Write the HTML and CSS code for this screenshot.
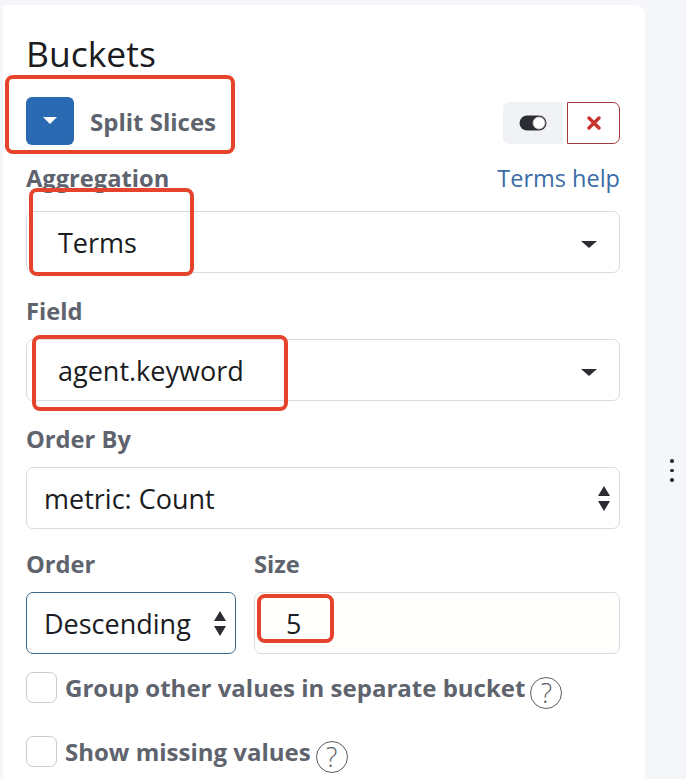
FILE: index.html
```html
<!DOCTYPE html>
<html>
	<head>
		<meta charset="utf-8">
		<title>Buckets</title>
		<link rel="stylesheet" href="styles.css">
	</head>
	<body>
		<div class="page">
			<div class="panel">
				<h2 class="title">Buckets</h2>

				<!-- 分组头部 -->
				<div class="bucketHead">
					<div class="toggleBtn">
						<svg width="14" height="8" viewBox="0 0 14 8"><path d="M0 0 L14 0 L7 7 Z" fill="#fff"/></svg>
					</div>
					<span class="bucketName">Split Slices</span>
					<div class="actions">
						<div class="switchBtn">
							<svg width="28" height="16" viewBox="0 0 28 16">
								<rect x="0.5" y="0.5" width="27" height="15" rx="7.5" fill="#2b2d33"/>
								<circle cx="20" cy="8" r="6" fill="#fff" stroke="#c8c8c8" stroke-width="0.8"/>
							</svg>
						</div>
						<div class="removeBtn">
							<svg width="14" height="14" viewBox="0 0 14 14"><path d="M2 2 L12 12 M12 2 L2 12" stroke="#c7342d" stroke-width="3.4" stroke-linecap="round"/></svg>
						</div>
					</div>
				</div>

				<div class="row aggRow">
					<div class="labelLine">
						<span class="label">Aggregation</span>
						<a class="helpLink">Terms help</a>
					</div>
					<div class="select combo">
						<span>Terms</span>
						<svg class="caret" width="16" height="8" viewBox="0 0 16 8"><path d="M0 0 L16 0 L8 7 Z" fill="#2b2d33"/></svg>
					</div>
				</div>

				<div class="row">
					<div class="labelLine"><span class="label">Field</span></div>
					<div class="select combo">
						<span>agent.keyword</span>
						<svg class="caret" width="16" height="8" viewBox="0 0 16 8"><path d="M0 0 L16 0 L8 7 Z" fill="#2b2d33"/></svg>
					</div>
				</div>

				<div class="row">
					<div class="labelLine"><span class="label">Order By</span></div>
					<div class="select native">
						<span>metric: Count</span>
						<svg class="updown" width="12" height="26" viewBox="0 0 12 26"><path d="M0 10 L12 10 L6 0 Z M0 15 L12 15 L6 25 Z" fill="#2b2d33"/></svg>
					</div>
				</div>

				<div class="row pairRow">
					<div>
						<div class="labelLine"><span class="label">Order</span></div>
						<div class="select native focused">
							<span>Descending</span>
							<svg class="updown" width="12" height="26" viewBox="0 0 12 26"><path d="M0 10 L12 10 L6 0 Z M0 15 L12 15 L6 25 Z" fill="#2b2d33"/></svg>
						</div>
					</div>
					<div>
						<div class="labelLine"><span class="label">Size</span></div>
						<div class="select sizeInput"><span>5</span></div>
					</div>
				</div>

				<div class="check first">
					<span class="box"></span>
					<span class="checkText">Group other values in separate bucket</span>
					<span class="help">?</span>
				</div>
				<div class="check">
					<span class="box"></span>
					<span class="checkText">Show missing values</span>
					<span class="help">?</span>
				</div>

				<!-- 标注框 -->
				<div class="mark markSplit"></div>
				<div class="mark markTerms"></div>
				<div class="mark markField"></div>
				<div class="mark markSize"></div>
			</div>

			<div class="side">
				<div class="dots"><i></i><i></i><i></i></div>
			</div>
		</div>
	</body>
</html>
```

FILE: styles.css
```css
* {
	margin: 0;
	padding: 0;
	box-sizing: border-box;
}
body {
	background-color: #f5f6fa;
	font-family: "Open Sans", "Liberation Sans", sans-serif;
	color: #1a1c21;
	overflow: hidden;
}
.page {
	display: flex;
	height: 779px;
}
.panel {
	width: 642px;
	margin: 5px 0 0 3px;
	padding: 27px 25px 0 23px;
	background-color: #fff;
	border-radius: 0 9px 0 0;
	position: relative;
}
.title {
	font-size: 35.5px;
	font-weight: 400;
	line-height: 42px;
	color: #1a1c21;
}
.bucketHead {
	display: flex;
	align-items: center;
	height: 48px;
	margin-top: 23px;
}
.toggleBtn {
	width: 48px;
	height: 48px;
	border-radius: 6px;
	background-color: #2a6ab3;
	display: flex;
	align-items: center;
	justify-content: center;
}
.bucketName {
	margin-left: 16px;
	font-size: 24px;
	font-weight: 700;
	color: #5e636d;
	line-height: 30px;
	padding-top: 2px;
}
.actions {
	margin-left: auto;
	display: flex;
	gap: 4px;
	padding-top: 4px;
}
.switchBtn {
	width: 60px;
	height: 42px;
	background-color: #f1f2f6;
	border-radius: 6px 0 0 6px;
	display: flex;
	align-items: center;
	justify-content: center;
}
.removeBtn {
	width: 53px;
	height: 42px;
	border: 1.5px solid #a8393a;
	border-radius: 0 7px 7px 0;
	display: flex;
	align-items: center;
	justify-content: center;
}
.row {
	margin-top: 24px;
}
.aggRow {
	margin-top: 19px;
}
.aggRow .labelLine {
	margin-bottom: 19px;
}
.pairRow {
	margin-top: 21px;
	display: grid;
	grid-template-columns: 210px 1fr;
	column-gap: 18px;
}
.labelLine {
	display: flex;
	justify-content: space-between;
	align-items: baseline;
	height: 28px;
	margin-bottom: 14px;
}
.label {
	font-size: 23.7px;
	font-weight: 700;
	line-height: 28px;
	color: #5e636d;
}
.helpLink {
	font-size: 23.5px;
	line-height: 28px;
	color: #3a6ca6;
}
.select {
	height: 62px;
	border: 1px solid #dadce2;
	border-radius: 7px;
	background-color: #fff;
	display: flex;
	align-items: center;
	font-size: 27px;
	color: #1a1c21;
	position: relative;
}
.combo {
	padding-left: 31px;
}
.native {
	padding-left: 17px;
}
.focused {
	border: 1.5px solid #3b6889;
}
.sizeInput {
	padding-left: 31px;
	background-color: #fffffd;
}
.caret {
	position: absolute;
	right: 22px;
	top: 29px;
}
.updown {
	position: absolute;
	right: 9px;
	top: 18px;
}
.check {
	display: flex;
	align-items: center;
	margin-top: 33px;
	height: 31px;
}
.check.first {
	margin-top: 18px;
}
.box {
	flex-shrink: 0;
	width: 31px;
	height: 31px;
	border: 1.5px solid #c9ccd3;
	border-radius: 7px;
	background-color: #fff;
}
.checkText {
	margin-left: 8px;
	font-size: 24px;
	font-weight: 700;
	color: #5e636d;
	white-space: nowrap;
}
.help {
	flex-shrink: 0;
	margin-left: 5px;
	width: 32px;
	height: 32px;
	border: 1.5px solid #5a5d63;
	border-radius: 50%;
	display: flex;
	align-items: center;
	justify-content: center;
	font-size: 27px;
	line-height: 1;
	font-weight: 300;
	color: #5a5d63;
	margin-top: 10px;
}
.mark {
	position: absolute;
	border: 4px solid #e5432c;
	border-radius: 8px;
}
.markSplit {
	left: 2px;
	top: 70px;
	width: 230px;
	height: 79px;
}
.markTerms {
	left: 26px;
	top: 183px;
	width: 165px;
	height: 88px;
}
.markField {
	left: 29px;
	top: 330px;
	width: 256px;
	height: 76px;
}
.markSize {
	left: 254px;
	top: 589px;
	width: 77px;
	height: 49px;
}
.side {
	flex: 1;
	padding: 459px 0 0 25px;
}
.dots {
	display: flex;
	flex-direction: column;
	gap: 6px;
}
.dots i {
	width: 3.5px;
	height: 3.5px;
	border-radius: 50%;
	background-color: #2b2d33;
}
```
